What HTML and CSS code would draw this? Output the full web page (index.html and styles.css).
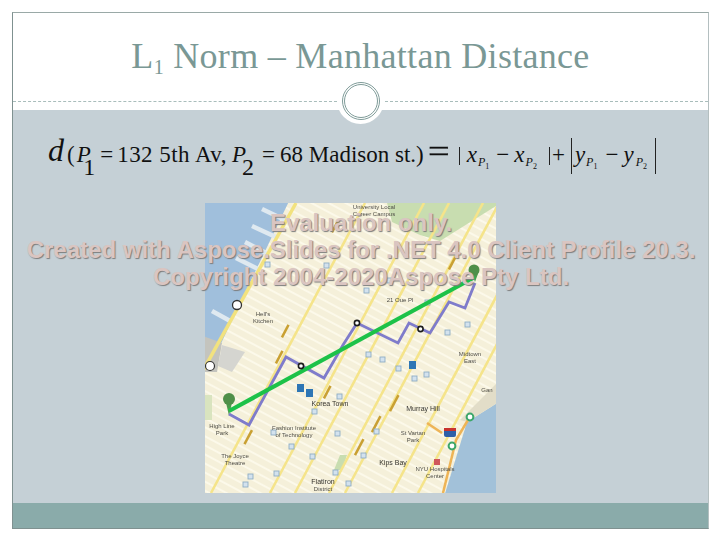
FILE: index.html
```html
<!DOCTYPE html>
<html lang="en">
<head>
<meta charset="utf-8">
<title>L1 Norm – Manhattan Distance</title>
<link rel="stylesheet" href="styles.css">
</head>
<body>
<div class="slide">
  <header class="head">
    <h1 class="title">L<sub class="title-sub">1</sub> Norm – Manhattan Distance</h1>
    <div class="rule"><span class="dash"></span><span class="rule-gap"></span><span class="dash"></span></div>
    <div class="notch"><div class="ring"></div></div>
  </header>
  <main class="body">
    <div class="formula">
      <i class="d">d</i><span class="t">(</span><i class="t p">P</i><span class="big">1</span><span class="t eq">=</span><span class="t addr">132 5th Av,</span><i class="t p2">P</i><span class="big big2">2</span><span class="t eq2">=</span><span class="t">68 Madison st.)</span><span class="bigeq">=</span><span class="bar"></span><i class="t x1">x</i><span class="s"><i>P</i><sub>1</sub></span><span class="t m1">−</span><i class="t x2">x</i><span class="s"><i>P</i><sub>2</sub></span><span class="bar b2"></span><span class="t plus">+</span><span class="bar tall b3"></span><i class="t y1">y</i><span class="s"><i>P</i><sub>1</sub></span><span class="t m2">−</span><i class="t y2">y</i><span class="s s2"><i>P</i><sub>2</sub></span><span class="bar tall b4"></span>
    </div>
    <svg class="map" viewBox="205 203 291 290" width="291" height="290" role="img" aria-label="Map of Midtown Manhattan">
      <defs>
        <filter id="soft" x="-5%" y="-5%" width="110%" height="110%"><feGaussianBlur stdDeviation="0.65"/></filter>
        <filter id="softer" x="-5%" y="-5%" width="110%" height="110%"><feGaussianBlur stdDeviation="0.3"/></filter>
        <pattern id="cross" width="8" height="8" patternUnits="userSpaceOnUse" patternTransform="rotate(28)">
          <rect width="8" height="8" fill="#f5f0da"/>
          <rect y="0" width="8" height="2" fill="#fcf9ea"/>
        </pattern>
        <clipPath id="mapclip"><rect x="205" y="203" width="291" height="290"/></clipPath>
      </defs>
      <g clip-path="url(#mapclip)">
      <g filter="url(#soft)">
        <rect x="195" y="190" width="315" height="315" fill="url(#cross)"/>
        <polygon points="195,195 292,195 233,318 218,350 195,372" fill="#a0bfdc"/>
        <g stroke="#dfe9f0" stroke-width="4.500">
          <line x1="262" y1="209" x2="285" y2="220"/><line x1="252" y1="226" x2="278" y2="238"/>
          <line x1="245" y1="242" x2="268" y2="254"/><line x1="236" y1="258" x2="260" y2="270"/>
          <line x1="212" y1="311" x2="232" y2="322"/>
        </g>
        <polygon points="195,333 222,343 217,372 195,372" fill="#c4c4be"/>
        <polygon points="222,345 245,352 232,372 218,366" fill="#d5d5d0"/>
        <polygon points="385,195 505,195 496,206 440,241 420,235 392,222" fill="#c8ddb0"/>
        <polygon points="505,398 467,422 443,500 505,500" fill="#a2c1d9"/>
        <polygon points="460,420 505,375 505,398 467,422" fill="#e2ddc8"/>
        <polygon points="340,455 347,455 342,470 334,470" fill="#c8ddb0"/>
        <polygon points="195,395 212,395 212,420 195,420" fill="#d9e4bf"/>
        <g stroke="#f5e48a" stroke-width="2.600" fill="none">
          <line x1="211" y1="493" x2="365" y2="203"/>
          <line x1="270" y1="493" x2="424" y2="203"/>
          <line x1="295" y1="493" x2="449" y2="203"/>
          <line x1="329" y1="493" x2="483" y2="203"/>
          <line x1="345" y1="493" x2="499" y2="203"/>
          <line x1="392" y1="493" x2="546" y2="203"/>
          <line x1="418" y1="493" x2="572" y2="203"/>
        </g>
        <line x1="170" y1="430" x2="296" y2="203" stroke="#f2e27e" stroke-width="3.500"/>
        <polyline points="468,420 456,440 443,493" fill="none" stroke="#eeb456" stroke-width="2.500"/>
        <line x1="427" y1="423" x2="442" y2="433" stroke="#eeb456" stroke-width="2.500"/>
        <g fill="#c9a032">
          <rect x="278" y="330" width="14" height="2.500" transform="rotate(-62 285 331)"/>
          <rect x="240" y="436" width="16" height="2.500" transform="rotate(-62 248 437)"/>
          <rect x="350" y="446" width="18" height="2.500" transform="rotate(-62 359 447)"/>
          <rect x="367" y="423" width="18" height="2.500" transform="rotate(-62 376 424)"/>
          <rect x="385" y="402" width="18" height="2.500" transform="rotate(-62 394 403)"/>
          <rect x="320" y="391" width="14" height="2.500" transform="rotate(-62 327 392)"/>
          <rect x="328" y="225" width="14" height="2.500" transform="rotate(-62 335 226)"/>
          <rect x="445" y="262" width="14" height="2.500" transform="rotate(-62 452 263)"/>
          <rect x="272" y="356" width="14" height="2.500" transform="rotate(-62 279 357)"/>
        </g>
        <g fill="#d3e2ee" stroke="#8fadc4" stroke-width="0.900">
          <rect x="265" y="262" width="5" height="5"/><rect x="324" y="263" width="5" height="5"/>
          <rect x="364" y="288" width="5" height="5"/><rect x="387" y="278" width="5" height="5"/>
          <rect x="425" y="300" width="5" height="5"/><rect x="445" y="330" width="5" height="5"/>
          <rect x="465" y="322" width="5" height="5"/><rect x="366" y="352" width="5" height="5"/>
          <rect x="380" y="357" width="5" height="5"/><rect x="396" y="366" width="5" height="5"/>
          <rect x="412" y="376" width="5" height="5"/><rect x="424" y="372" width="5" height="5"/>
          <rect x="337" y="394" width="5" height="5"/><rect x="312" y="409" width="5" height="5"/>
          <rect x="271" y="430" width="5" height="5"/><rect x="335" y="431" width="5" height="5"/>
          <rect x="374" y="429" width="5" height="5"/><rect x="361" y="453" width="5" height="5"/>
          <rect x="289" y="444" width="5" height="5"/><rect x="310" y="454" width="5" height="5"/>
          <rect x="274" y="471" width="5" height="5"/><rect x="248" y="474" width="5" height="5"/>
          <rect x="243" y="482" width="5" height="5"/><rect x="333" y="470" width="5" height="5"/>
          <rect x="346" y="481" width="5" height="5"/>
        </g>
        <g fill="#2f76b5">
          <rect x="297" y="384" width="7" height="8"/><rect x="306" y="389" width="7" height="8"/><rect x="409" y="361" width="7" height="8"/>
        </g>
        <circle cx="237" cy="305" r="4.500" fill="#fff" stroke="#333" stroke-width="1.300"/>
        <circle cx="210" cy="366" r="4.500" fill="#fff" stroke="#333" stroke-width="1.200"/>
        <rect x="444" y="428" width="12" height="9" rx="2" fill="#2f5fa8"/>
        <rect x="444" y="428" width="12" height="3" fill="#c8332e"/>
        <circle cx="470" cy="417" r="3.400" fill="#fff" stroke="#3da76a" stroke-width="2"/>
        <circle cx="452" cy="446" r="3.400" fill="#fff" stroke="#3da76a" stroke-width="2"/>
        <rect x="434" y="459" width="6" height="6" fill="#d0585c"/>
      </g>
      <g class="map-label" filter="url(#softer)">
        <text x="263" y="316">Hell's</text><text x="263" y="323">Kitchen</text>
        <text x="400" y="302">21 Oue Pl</text>
        <text x="330" y="406" class="bold">Korea Town</text>
        <text x="423" y="411" class="bold">Murray Hill</text>
        <text x="470" y="356">Midtown</text><text x="470" y="363">East</text>
        <text x="393" y="465" class="bold">Kips Bay</text>
        <text x="323" y="484" class="bold">Flatiron</text>
        <text x="323" y="491">District</text>
        <text x="294" y="430">Fashion Institute</text><text x="294" y="437">of Technology</text>
        <text x="222" y="428">High Line</text><text x="222" y="435">Park</text>
        <text x="235" y="458">The Joyce</text><text x="235" y="465">Theatre</text>
        <text x="435" y="471">NYU Hospitals</text><text x="435" y="478">Center</text>
        <text x="413" y="435">St Vartan</text><text x="413" y="442">Park</text>
        <text x="374" y="209">University Local</text><text x="374" y="216">Career Campus</text>
        <text x="487" y="392">Gan</text>
      </g>
      <g filter="url(#softer)">
        <polygon points="229,416 225,398 233,398" fill="#4c9a4c"/>
        <circle cx="229" cy="399" r="6" fill="#4f8f4a"/>
        <polygon points="475,282 471,271 479,271" fill="#4c9a4c"/>
        <circle cx="474" cy="270" r="5.500" fill="#4f8f4a"/>
        <polyline points="229,414 249,425 286,357 324,378 343,345 357,323 398,343 409,323 430,333 449,302 465,308 475,283" fill="none" stroke="#7f7bcb" stroke-width="2.800"/>
        <line x1="229" y1="411" x2="475" y2="277" stroke="#1fc248" stroke-width="4.200"/>
        <g fill="#fff" stroke="#1e1e1e" stroke-width="1.600">
          <circle cx="357" cy="323" r="2.600"/><circle cx="420.500" cy="329" r="2.600"/><circle cx="301" cy="366" r="2.600"/>
        </g>
      </g>
      </g>
    </svg>
  </main>
  <footer class="foot"></footer>
  <div class="watermark">
    <div>Evaluation only.</div>
    <div>Created with Aspose.Slides for .NET 4.0 Client Profile 20.3.</div>
    <div>Copyright 2004-2020Aspose Pty Ltd.</div>
  </div>
</div>
</body>
</html>
```
FILE: styles.css
```css
* { box-sizing: border-box; }
html, body { margin: 0; padding: 0; background: #fff; }
body { width: 720px; height: 540px; overflow: hidden; }
.slide {
  position: relative;
  width: 697px;
  height: 517px;
  margin: 12px 0 0 12px;
  border: 1px solid #9aa9a7;
  border-right-color: #b4bfc0;
  border-left-color: #7f9190;
  border-bottom-color: #7f9190;
  display: flex;
  flex-direction: column;
  background: #fff;
}
.head {
  position: relative;
  flex: 0 0 97px;
  background: #fff;
  display: flex;
  flex-direction: column;
  align-items: center;
}
.title {
  margin: 21px 0 0;
  font: 400 36px/44px "Liberation Serif", serif;
  color: #7a9895;
  white-space: nowrap;
  letter-spacing: .3px;
}
.title-sub { font-size: 20px; line-height: 0; vertical-align: -6px; }
.rule {
  display: flex;
  width: 100%;
  position: absolute;
  top: 88px;
  left: 0;
}
.dash { flex: 1; border-top: 1px dashed #a9bdbb; }
.rule-gap { flex: 0 0 48px; }
.notch {
  position: absolute;
  left: 324px;
  top: 64px;
  width: 47px;
  height: 47px;
  border-radius: 50%;
  background: #fff;
  display: flex;
  align-items: center;
  justify-content: center;
  z-index: 2;
}
.ring {
  width: 38px;
  height: 38px;
  border-radius: 50%;
  border: 3px double #7f9c99;
}
.body {
  flex: 1;
  background: #c5d0d6;
  display: flex;
  flex-direction: column;
}
.formula {
  display: flex;
  align-items: baseline;
  height: 36px;
  margin: 26px 0 31px;
  padding-left: 35px;
  font-family: "Liberation Serif", serif;
  color: #111;
  white-space: nowrap;
}
.d { font-size: 32px; line-height: 30px; margin-right: 3px; position: relative; top: -1px; }
.t { font-size: 23px; line-height: 30px; }
.p { margin-left: 2px; }
.big { font-size: 24px; line-height: 0; position: relative; top: 13px; margin-left: -7.5px; }
.eq { margin: 0 4px 0 5px; }
.addr { letter-spacing: .45px; }
.p2 { margin-left: 5px; }
.big2 { margin-left: -4px; }
.eq2 { margin: 0 5px 0 8px; }
.bigeq {
  font-size: 32px;
  line-height: 0;
  margin: 0 13px 0 4px;
  transform: scaleX(1.2);
  transform-origin: left;
  -webkit-text-stroke: .4px #111;
}
.bar {
  width: 1px;
  height: 18px;
  margin-top: 4px;
  background: #222;
  align-self: center;
}
.s { font-size: 12px; line-height: 0; position: relative; top: 4px; margin-left: 1px; }
.s sub { font-size: 8px; line-height: 0; }
.x1 { margin-left: 7px; }
.m1 { margin-left: 7px; }
.x2 { margin-left: 5px; }
.b2 { margin-left: 12px; }
.plus { margin-left: 2px; }
.tall { height: 36px; }
.b3 { margin-left: 6px; }
.y1 { margin-left: 3px; }
.m2 { margin-left: 8px; }
.y2 { margin-left: 5px; }
.s2 { margin-left: 2px; }
.b4 { margin-left: 7.5px; }
.map { display: block; margin-left: 192px; flex: none; }
.map-label text {
  font: 6px "Liberation Sans", sans-serif;
  fill: #4e4d46;
  text-anchor: middle;
}
.map-label .bold { font-size: 7px; fill: #36352f; }
.foot { flex: 0 0 25px; background: #8aabaa; }
.watermark {
  position: absolute;
  left: -12px;
  top: 196px;
  width: 720px;
  text-align: center;
  font: 700 24px/27px "Liberation Sans", sans-serif;
  color: #dac5c1;
  text-shadow: 1px 1px 1px #7d7d7d;
  white-space: nowrap;
  z-index: 3;
}
```
